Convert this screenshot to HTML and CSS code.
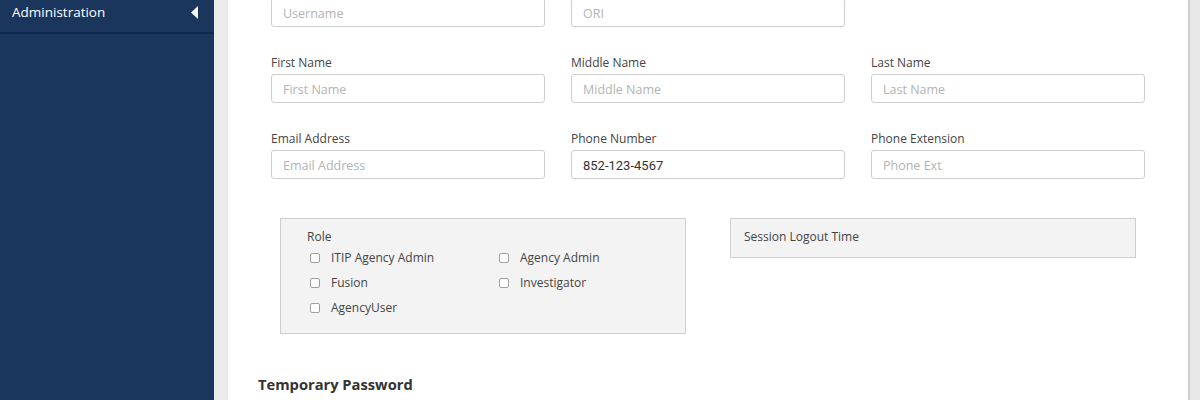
FILE: index.html
```html
<!DOCTYPE html>
<html>
<head>
<meta charset="utf-8">
<link rel="stylesheet" href="styles.css">
</head>
<body>
<aside class="sidebar">
  <div class="nav-item">
    <span class="nav-label">Administration</span>
    <svg class="caret" width="7" height="13" viewBox="0 0 7 13"><path d="M7 0 L0 6.5 L7 13 Z" fill="#fff"/></svg>
  </div>
</aside>
<div class="gutter"></div>
<main class="panel">
  <div class="content">
    <div class="grid">
      <div class="field"><input class="input" placeholder="Username" aria-label="Username"></div>
      <div class="field"><input class="input" placeholder="ORI" aria-label="ORI"></div>
      <div class="field"></div>
      <div class="field"><label>First Name</label><input class="input" placeholder="First Name"></div>
      <div class="field"><label>Middle Name</label><input class="input" placeholder="Middle Name"></div>
      <div class="field"><label>Last Name</label><input class="input" placeholder="Last Name"></div>
      <div class="field"><label>Email Address</label><input class="input" placeholder="Email Address"></div>
      <div class="field"><label>Phone Number</label><input class="input value" value="852-123-4567"></div>
      <div class="field"><label>Phone Extension</label><input class="input" placeholder="Phone Ext"></div>
    </div>
    <div class="boxes">
      <div class="box role-box">
        <div class="box-title">Role</div>
        <div class="roles">
          <div class="role"><span class="cb"></span>ITIP Agency Admin</div>
          <div class="role"><span class="cb"></span>Agency Admin</div>
          <div class="role"><span class="cb"></span>Fusion</div>
          <div class="role"><span class="cb"></span>Investigator</div>
          <div class="role"><span class="cb"></span>AgencyUser</div>
        </div>
      </div>
      <div class="box session-box">
        <div class="box-title">Session Logout Time</div>
      </div>
    </div>
    <h3 class="section-title">Temporary Password</h3>
  </div>
</main>
</body>
</html>
```

FILE: styles.css
```css
* { box-sizing: border-box; }
html, body { margin: 0; padding: 0; }
body {
  display: flex;
  width: 1200px;
  height: 400px;
  overflow: hidden;
  background: #e8e8e8;
  font-family: "Open Sans", sans-serif;
}
.sidebar {
  width: 214px;
  flex: 0 0 214px;
  background: #1b365d;
}
.nav-item {
  height: 34px;
  border-bottom: 2px solid #10284b;
  display: flex;
  align-items: flex-start;
  justify-content: space-between;
  padding: 3px 16px 0 12px;
  color: #fff;
  font-size: 13.5px;
}
.nav-label { line-height: 18px; }
.caret { display: block; margin-top: 3px; }
.gutter {
  width: 14px;
  flex: 0 0 14px;
  background: #ebebeb;
}
.panel {
  width: 962px;
  flex: 0 0 962px;
  background: #fff;
  border-right: 2px solid #cfcfcf;
  height: 400px;
  overflow: hidden;
}
.content {
  margin-top: -2px;
  padding-left: 30px;
}
.grid {
  display: grid;
  grid-template-columns: repeat(3, 274px);
  column-gap: 26px;
  row-gap: 28px;
  padding-left: 13px;
}
.field { display: flex; flex-direction: column; }
.field label {
  font-size: 12px;
  line-height: 15px;
  color: #444;
  margin-bottom: 4px;
}
.input {
  height: 29px;
  border: 1px solid #cfcfcf;
  border-radius: 3px;
  padding: 2px 11px 0;
  font-family: "Open Sans", sans-serif;
  font-size: 12.5px;
  color: #333;
  background: #fff;
  outline: none;
}
.input::placeholder { color: #b3b3b3; }
.input.value {
  font-family: Roboto, sans-serif;
  font-size: 13px;
  color: #333;
}
.boxes {
  display: flex;
  gap: 44px;
  margin-top: 39px;
  padding-left: 22px;
  align-items: flex-start;
}
.box {
  width: 406px;
  background: #f3f3f3;
  border: 1px solid #cfcfcf;
}
.role-box {
  height: 116px;
  padding: 10px 0 0 26px;
}
.session-box {
  height: 40px;
  padding: 10px 0 0 13px;
}
.box-title {
  font-size: 12px;
  line-height: 16px;
  color: #444;
}
.roles {
  display: grid;
  grid-template-columns: 189px 189px;
  grid-auto-rows: 25px;
  margin-top: 0;
  padding-left: 3px;
}
.role {
  display: flex;
  align-items: center;
  font-size: 12px;
  color: #444;
}
.cb {
  width: 10px;
  height: 10px;
  border: 1px solid #a0a0a0;
  border-radius: 2px;
  background: #fff;
  margin-right: 11px;
}
.section-title {
  margin: 40px 0 0 0;
  font-size: 14.7px;
  font-weight: 700;
  color: #333;
  line-height: 20px;
}
```
